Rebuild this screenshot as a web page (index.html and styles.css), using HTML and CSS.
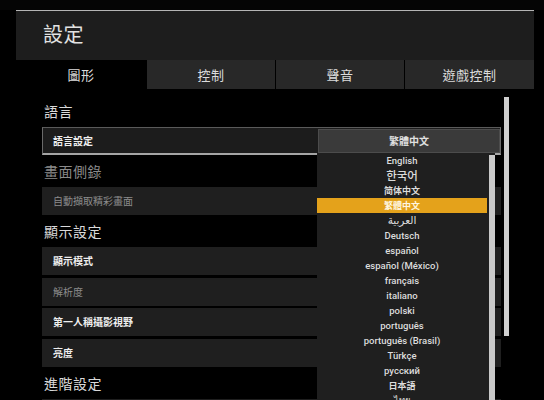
FILE: index.html
```html
<!DOCTYPE html>
<html lang="zh-Hant">
<head>
<meta charset="utf-8">
<title>設定</title>
<link rel="stylesheet" href="styles.css">
</head>
<body>
<div class="topbar"></div>
<div class="panel">
  <div class="header"><h1 class="title">設定</h1></div>
  <div class="tabs">
    <div class="tab active">圖形</div>
    <div class="tab">控制</div>
    <div class="tab">聲音</div>
    <div class="tab">遊戲控制</div>
  </div>
  <div class="content">
    <div class="list">
      <div class="section">語言</div>
      <div class="row focused">
        <span class="label">語言設定</span>
        <div class="value">繁體中文</div>
        <div class="dropdown">
          <ul class="options">
            <li>English</li>
            <li class="ko">한국어</li>
            <li class="cjk">简体中文</li>
            <li class="cjk selected">繁體中文</li>
            <li class="ar">العربية</li>
            <li>Deutsch</li>
            <li>español</li>
            <li>español (México)</li>
            <li>français</li>
            <li>italiano</li>
            <li>polski</li>
            <li>português</li>
            <li>português (Brasil)</li>
            <li>Türkçe</li>
            <li>русский</li>
            <li class="cjk">日本語</li>
            <li>ไทย</li>
          </ul>
          <div class="dd-scroll"></div>
        </div>
      </div>
      <div class="section disabled">畫面側錄</div>
      <div class="row disabled"><span class="label">自動擷取精彩畫面</span></div>
      <div class="section">顯示設定</div>
      <div class="row"><span class="label">顯示模式</span></div>
      <div class="row disabled"><span class="label">解析度</span></div>
      <div class="row"><span class="label">第一人稱攝影視野</span></div>
      <div class="row"><span class="label">亮度</span></div>
      <div class="section">進階設定</div>
      <div class="row"><span class="label">&nbsp;</span></div>
    </div>
    <div class="scrollbar"></div>
  </div>
</div>
</body>
</html>
```

FILE: styles.css
```css
* { box-sizing: border-box; }
html, body {
  margin: 0;
  padding: 0;
  background: #000;
  width: 544px;
  height: 400px;
  overflow: hidden;
  font-family: "Noto Sans CJK TC", "Noto Sans", sans-serif;
  color: #ddd;
}
.topbar {
  height: 10px;
  background: #050505;
}
.panel {
  margin-left: 16px;
  width: 518px;
}
.header {
  height: 50px;
  background: #1d1d1d;
  border-top: 1px solid #b5b5b5;
  padding-left: 27px;
}
.title {
  margin: 0;
  font-size: 20px;
  font-weight: 400;
  line-height: 46px;
  color: #e2e2e2;
  letter-spacing: 0.5px;
}
.tabs {
  display: grid;
  grid-template-columns: 130px 128px 128px 1fr;
  column-gap: 1px;
  height: 29px;
}
.tab {
  background: #282828;
  color: #dcdcdc;
  font-size: 13px;
  line-height: 29px;
  text-align: center;
  letter-spacing: 0.5px;
}
.tab.active {
  background: #000;
}
.content {
  display: flex;
  gap: 3px;
  padding-left: 26px;
  padding-top: 6px;
}
.list {
  width: 459px;
}
.section {
  height: 32px;
  line-height: 32px;
  font-size: 14px;
  padding-left: 2px;
  color: #dadada;
  letter-spacing: 0.5px;
}
.section.disabled {
  color: #8a8a8a;
}
.row {
  position: relative;
  display: flex;
  height: 28px;
  background: #1f1f1f;
  align-items: stretch;
}
.row + .row {
  margin-top: 2.5px;
}
.label {
  flex: 1;
  padding-left: 11px;
  font-size: 10px;
  font-weight: 700;
  line-height: 28px;
  color: #eeeeee;
}
.row.disabled .label {
  color: #8c8c8c;
  font-weight: 400;
}
.row.focused {
  border-top: 1px solid #5a5a5a;
  border-left: 1px solid #6a6a6a;
  border-right: 1px solid #6a6a6a;
  border-bottom: 2px solid #a5a5a5;
  background: #1c1c1c;
}
.row.focused .label {
  line-height: 25px;
  padding-left: 10px;
}
.value {
  width: 182px;
  margin-top: 1px;
  background: #3a3a3a;
  border: 1px solid #4c4c4c;
  font-size: 10px;
  font-weight: 700;
  line-height: 22px;
  text-align: center;
  color: #e0e0e0;
}
.dropdown {
  position: absolute;
  top: 100%;
  left: 274px;
  width: 178px;
  height: 260px;
  display: flex;
  gap: 2px;
  background: #1f1f1f;
  z-index: 5;
}
.options {
  list-style: none;
  margin: 0;
  padding: 0;
  width: 170px;
}
.options li {
  height: 15px;
  line-height: 15px;
  text-align: center;
  font-family: Roboto, "Noto Sans", sans-serif;
  font-size: 9.5px;
  font-weight: 500;
  color: #dcdcdc;
}
.options li.ko {
  font-family: "Noto Sans CJK KR", sans-serif;
  font-size: 11.5px;
}
.options li.ar {
  font-family: "DejaVu Sans", sans-serif;
  font-size: 10.5px;
}
.options li.cjk {
  font-family: "Noto Sans CJK TC", sans-serif;
  font-size: 9px;
  font-weight: 700;
}
.options li.selected {
  background: #e4a21b;
  color: #fff6e0;
}
.dd-scroll {
  width: 6px;
  margin-top: 2px;
  background: #c9c9c9;
}
.scrollbar {
  width: 5px;
  height: 239px;
  margin-top: 2px;
  background: #cfcfcf;
}
```
